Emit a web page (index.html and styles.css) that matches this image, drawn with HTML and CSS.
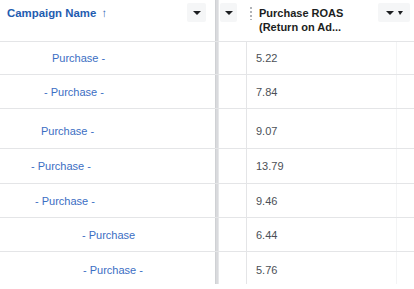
FILE: index.html
```html
<!DOCTYPE html>
<html>
<head>
<meta charset="utf-8">
<link rel="stylesheet" href="styles.css">
</head>
<body>
<div class="table">
  <div class="head">
    <div class="hcell name">
      <span class="htitle">Campaign Name <span class="arrow">↑</span></span>
      <span class="btn"><span class="tri"></span></span>
    </div>
    <div class="divider"></div>
    <div class="hcell narrow"><span class="btn"><span class="tri"></span></span></div>
    <div class="hcell metric">
      <span class="handle"></span>
      <span class="mtitle">Purchase ROAS<br>(Return on Ad...</span>
      <span class="btn wide"><span class="tri"></span><span class="tri small"></span></span>
    </div>
  </div>

  <div class="row r33"><div class="cell name"><span class="mask" style="width:52px"></span><span class="link">Purchase -</span></div><div class="divider"></div><div class="cell narrow"></div><div class="cell num">5.22</div><div class="cell tail"></div></div>
  <div class="row"><div class="cell name"><span class="mask" style="width:44px"></span><span class="link">- Purchase -</span></div><div class="divider"></div><div class="cell narrow"></div><div class="cell num">7.84</div><div class="cell tail"></div></div>
  <div class="row r40"><div class="cell name"><span class="mask" style="width:41px"></span><span class="link">Purchase -</span></div><div class="divider"></div><div class="cell narrow"></div><div class="cell num">9.07</div><div class="cell tail"></div></div>
  <div class="row r35"><div class="cell name"><span class="mask" style="width:31px"></span><span class="link">- Purchase -</span></div><div class="divider"></div><div class="cell narrow"></div><div class="cell num">13.79</div><div class="cell tail"></div></div>
  <div class="row"><div class="cell name"><span class="mask" style="width:35px"></span><span class="link">- Purchase -</span></div><div class="divider"></div><div class="cell narrow"></div><div class="cell num">9.46</div><div class="cell tail"></div></div>
  <div class="row"><div class="cell name"><span class="mask" style="width:82px"></span><span class="link">- Purchase</span></div><div class="divider"></div><div class="cell narrow"></div><div class="cell num">6.44</div><div class="cell tail"></div></div>
  <div class="row last"><div class="cell name"><span class="mask" style="width:83px"></span><span class="link">- Purchase -</span></div><div class="divider"></div><div class="cell narrow"></div><div class="cell num">5.76</div><div class="cell tail"></div></div>
</div>
</body>
</html>
```

FILE: styles.css
```css
html, body {
  margin: 0;
  padding: 0;
  background: #ffffff;
}
body {
  font-family: "Liberation Sans", Arial, Helvetica, sans-serif;
  font-size: 11px;
  width: 414px;
  height: 289px;
  overflow: hidden;
}
.table {
  display: flex;
  flex-direction: column;
  width: 414px;
}
.head {
  display: grid;
  grid-template-columns: 215px 4px 27px 1fr;
  height: 42px;
  border-bottom: 1px solid #e4e5e7;
  box-sizing: border-box;
}
.divider {
  background: #d9dadd;
  border-left: 1px solid #cfd1d4;
  border-right: 1px solid #e6e7e9;
  box-sizing: border-box;
}
.hcell {
  display: flex;
  align-items: flex-start;
  box-sizing: border-box;
}
.hcell.name {
  padding: 0 9px 0 7px;
  justify-content: space-between;
}
.htitle {
  color: #1f5cb0;
  font-weight: bold;
  font-size: 11.4px;
  line-height: 14px;
  padding-top: 6px;
}
.arrow {
  font-weight: bold;
  margin-left: 2px;
}
.btn {
  display: flex;
  align-items: center;
  justify-content: center;
  gap: 5px;
  width: 19px;
  height: 19px;
  margin-top: 3px;
  background: #f5f6f7;
  border-radius: 2px;
}
.hcell.narrow {
  padding-left: 1px;
}
.hcell.narrow .btn {
  width: 17px;
}
.tri {
  width: 0;
  height: 0;
  border-left: 4px solid transparent;
  border-right: 4px solid transparent;
  border-top: 4px solid #1c1e21;
}
.tri.small {
  border-left-width: 2px;
  border-right-width: 3px;
}
.hcell.metric {
  padding: 0 4px 0 4px;
}
.handle {
  width: 2px;
  height: 14px;
  margin-top: 6px;
  background-image: radial-gradient(circle, #b0b3b8 0.9px, transparent 1px);
  background-size: 2px 4px;
}
.mtitle {
  flex: 1;
  color: #1c1e21;
  font-weight: bold;
  line-height: 14px;
  padding: 6px 0 0 7px;
}
.btn.wide {
  width: 32px;
  gap: 4px;
}
.row {
  display: grid;
  grid-template-columns: 215px 4px 27px 150px 1fr;
  height: 34px;
  border-bottom: 1px solid #e4e5e7;
  box-sizing: border-box;
}
.row.r33 { height: 33px; }
.row.r40 { height: 40px; }
.row.r35 { height: 35px; }
.row.last {
  height: 32px;
  border-bottom: none;
}
.cell {
  display: flex;
  align-items: center;
  box-sizing: border-box;
}
.r40 .cell.name, .r40 .cell.num {
  padding-top: 5px;
}
.last .cell.name, .last .cell.num {
  padding-top: 4px;
}
.mask {
  display: inline-block;
  flex: none;
}
.link {
  color: #3b6ec3;
  white-space: nowrap;
}
.cell.num {
  border-left: 1px solid #e4e5e7;
  padding-left: 9px;
  color: #4b4f56;
}
.cell.tail {
  border-left: 1px solid #f3f4f5;
}
```
